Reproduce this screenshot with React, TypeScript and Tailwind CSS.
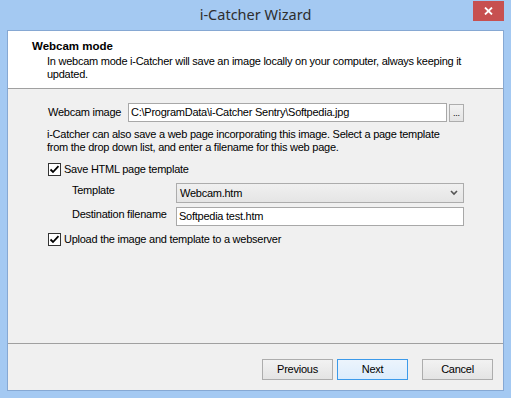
import React from "react";

const ui = { fontFamily: '"Liberation Sans", Arial, sans-serif' };

function Check() {
  return (
    <div className="w-[13px] h-[13px] border border-[#333333] bg-white flex items-center justify-center shrink-0">
      <svg width="11" height="11" viewBox="0 0 11 11">
        <path d="M1.5 5.5 L4 8 L9.5 2.2" fill="none" stroke="#000" strokeWidth="1.8" />
      </svg>
    </div>
  );
}

function Btn({ label, primary }: { label: string; primary?: boolean }) {
  return (
    <div
      className={
        "w-[71px] h-[21px] flex items-center justify-center text-[11px] text-black border " +
        (primary
          ? "border-[#3c9aea] bg-gradient-to-b from-[#ecf4fc] to-[#dcecfc]"
          : "border-[#adadad] bg-gradient-to-b from-[#f2f2f2] to-[#e4e4e4]")
      }
    >
      {label}
    </div>
  );
}

export default function App() {
  return (
    <div className="w-[511px] h-[398px] bg-[#a4c9f2] flex flex-col" style={ui}>
      <div className="relative h-[30px] flex items-center justify-center shrink-0">
        <span className="text-[14.5px] text-[#2e2e2e]" style={{ fontFamily: '"Noto Sans", "Open Sans", sans-serif' }}>
          i-Catcher Wizard
        </span>
        <div className="absolute right-[7px] top-[1px] w-[31px] h-[20px] bg-[#c75050] flex items-center justify-center">
          <svg width="9" height="8" viewBox="0 0 9 8">
            <path d="M1 0.5 L8 7.5 M8 0.5 L1 7.5" stroke="#fff" strokeWidth="1.8" />
          </svg>
        </div>
      </div>
      <div className="mx-[7px] border border-[#86a8d3] flex flex-col h-[361px] text-[11px] text-black tracking-[-0.25px]">
        <div className="h-[57px] bg-white pt-[8px] pl-[24px] shrink-0">
          <div className="font-bold text-[11.5px] leading-[14px] tracking-normal">Webcam mode</div>
          <div className="ml-[15px] mt-[2px] leading-[13px] w-[420px]">
            In webcam mode i-Catcher will save an image locally on your computer, always keeping it updated.
          </div>
        </div>
        <div className="h-px bg-[#a0a0a0] shrink-0" />
        <div className="flex-1 bg-[#f0f0f0] pl-[40px] pt-[14px] flex flex-col">
          <div className="flex items-center h-[19px]">
            <span className="w-[80px]">Webcam image</span>
            <div className="w-[319px] h-[19px] border border-[#a8a8a8] bg-white flex items-center pl-[2px]">
              C:\ProgramData\i-Catcher Sentry\Softpedia.jpg
            </div>
            <div className="ml-[2px] w-[15px] h-[18px] border border-[#adadad] bg-gradient-to-b from-[#f2f2f2] to-[#e4e4e4] flex items-end justify-center pb-[3px] text-[9px] leading-none">
              ...
            </div>
          </div>
          <div className="mt-[6px] -ml-[1px] leading-[13px] w-[410px]">
            i-Catcher can also save a web page incorporating this image. Select a page template from the drop down list, and enter a filename for this web page.
          </div>
          <div className="mt-[9px] flex items-center h-[13px] gap-[3px]">
            <Check />
            <span>Save HTML page template</span>
          </div>
          <div className="mt-[7px] ml-[24px] flex items-center h-[20px]">
            <span className="w-[104px] -mt-[6px]">Template</span>
            <div className="w-[288px] h-[20px] border border-[#acacac] bg-gradient-to-b from-[#f0f0f0] to-[#e5e5e5] flex items-center justify-between pl-[3px] pr-[5px]">
              <span>Webcam.htm</span>
              <svg width="8" height="6" viewBox="0 0 8 6">
                <path d="M1 1 L4 4 L7 1" fill="none" stroke="#555" strokeWidth="1.6" />
              </svg>
            </div>
          </div>
          <div className="mt-[4px] ml-[24px] flex items-center h-[19px]">
            <span className="w-[104px] -mt-[4px]">Destination filename</span>
            <div className="w-[288px] h-[19px] border border-[#a8a8a8] bg-white flex items-center pl-[2px]">
              Softpedia test.htm
            </div>
          </div>
          <div className="mt-[7px] flex items-center h-[13px] gap-[3px]">
            <Check />
            <span>Upload the image and template to a webserver</span>
          </div>
        </div>
        <div className="h-px bg-[#a0a0a0] shrink-0" />
        <div className="h-[46px] bg-[#f0f0f0] shrink-0 flex items-start justify-end pt-[15px] pr-[10px]">
          <Btn label="Previous" />
          <div className="w-[4px]" />
          <Btn label="Next" primary />
          <div className="w-[14px]" />
          <Btn label="Cancel" />
        </div>
      </div>
    </div>
  );
}
